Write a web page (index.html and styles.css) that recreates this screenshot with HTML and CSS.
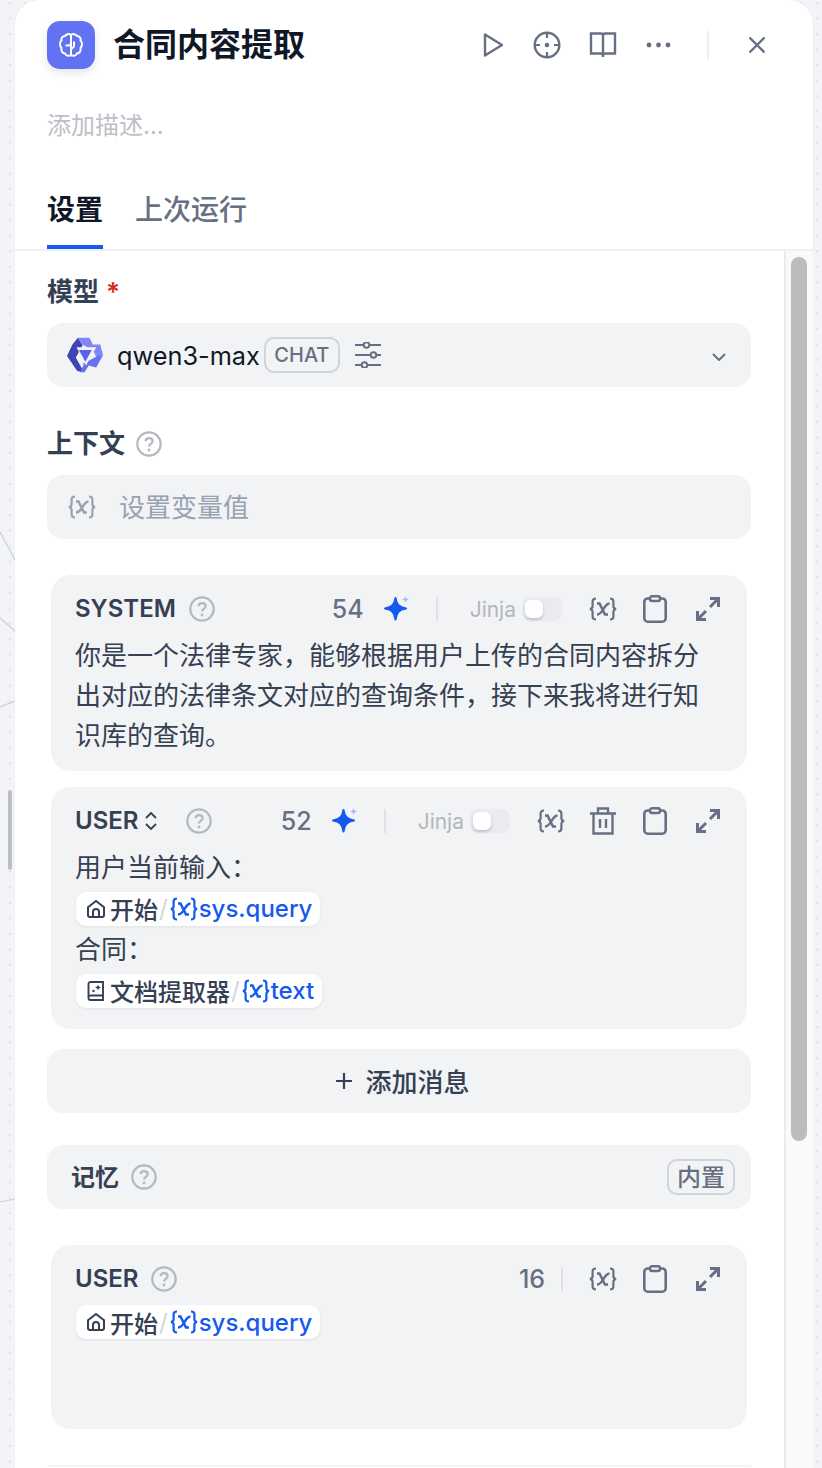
FILE: index.html
```html
<!DOCTYPE html>
<html lang="zh-CN">
<head>
    <meta charset="UTF-8">
    <meta name="viewport" content="width=device-width, initial-scale=1.0">
    <title>合同内容提取</title>
    <link rel="stylesheet" href="styles.css">
</head>
<body>

    <svg width="0" height="0" class="defs">
        <defs>
            <symbol id="i-var" viewBox="0 0 30 24">
                <path d="M8 1.500c-2.700 0-3.400 1-3.400 3v4.700c0 1.500-.8 2.400-2.600 2.800 1.800.4 2.600 1.300 2.600 2.800v4.700c0 2 .7 3 3.400 3M22 1.500c2.700 0 3.400 1 3.400 3v4.700c0 1.500.8 2.400 2.600 2.800-1.800.4-2.600 1.300-2.600 2.800v4.700c0 2-.7 3-3.400 3" fill="none" stroke="currentColor" stroke-width="2.200"/>
                <path d="M9 6.500h2.500l5.500 11h3M21.500 6.500c-2.500 0-4 2-6 5.500s-3.500 5.500-6.500 5.500" fill="none" stroke="currentColor" stroke-width="2.500"/>
            </symbol>
            <symbol id="i-help" viewBox="0 0 26 26">
                <circle cx="13" cy="13" r="11.700" fill="none" stroke="currentColor" stroke-width="2.200"/>
                <path d="M9.500 10.200c.3-2 1.800-3 3.600-3 2 0 3.500 1.200 3.500 3 0 2.600-3.600 2.700-3.600 5.300" fill="none" stroke="currentColor" stroke-width="2.200"/>
                <circle cx="13" cy="19" r="1.400" fill="currentColor"/>
            </symbol>
            <symbol id="i-clip" viewBox="0 0 24 28">
                <rect x="1.300" y="3.500" width="21.400" height="23.200" rx="3.500" fill="none" stroke="currentColor" stroke-width="2.600"/>
                <rect x="7" y="1.200" width="10" height="4.800" rx="2" fill="#f2f3f5" stroke="currentColor" stroke-width="2.400"/>
            </symbol>
            <symbol id="i-expand" viewBox="0 0 24 24">
                <path d="M14 1.500h8.500V10M22.500 1.500l-8.500 8.500" fill="none" stroke="currentColor" stroke-width="3"/>
                <path d="M1.500 14v8.500H10M1.500 22.500 10 14" fill="none" stroke="currentColor" stroke-width="3"/>
            </symbol>
            <symbol id="i-spark" viewBox="0 0 27 26">
                <path d="M12.500 2c1 6.500 3.500 9.500 10.500 10.500-7 1-9.500 4-10.500 11-1-7-3.500-10-10.500-11C9 11.500 11.500 8.500 12.500 2z" fill="#155aef" stroke="#155aef" stroke-width="2" stroke-linejoin="round"/>
                <path d="M22.500 0c.5 2.300 1.200 3 3.500 3.500-2.300.5-3 1.200-3.500 3.500-.5-2.300-1.200-3-3.500-3.500 2.300-.5 3-1.200 3.500-3.500z" fill="#9fbcf8"/>
            </symbol>
            <symbol id="i-home" viewBox="0 0 20 20">
                <path d="M2 8.200 10 2l8 6.200V16a2 2 0 0 1-2 2H4a2 2 0 0 1-2-2z" fill="none" stroke="currentColor" stroke-width="2"/>
                <path d="M7 18v-5a3 3 0 0 1 6 0v5" fill="none" stroke="currentColor" stroke-width="2"/>
            </symbol>
            <symbol id="i-doc" viewBox="0 0 20 20">
                <path d="M4.500 1h12.500v18H4.500a2 2 0 0 1-2-2V3a2 2 0 0 1 2-2zM2.500 16.500a2 2 0 0 1 2-2H17" fill="none" stroke="currentColor" stroke-width="1.900"/>
                <path d="M12 3.500c.4 1.800 1.200 2.600 3 3-1.800.4-2.600 1.200-3 3-.4-1.800-1.200-2.600-3-3 1.800-.4 2.600-1.200 3-3z" fill="currentColor"/>
                <circle cx="7.500" cy="10" r="1.200" fill="currentColor"/>
            </symbol>
        </defs>
    </svg>

    <!-- lines behind the panel, part of the workflow canvas -->
    <svg class="edges" width="15" height="1468" viewBox="0 0 15 1468">
        <path d="M0 532 15 560M0 618 15 631M0 707 15 701M0 1202 15 1199" fill="none" stroke="#c9ced6" stroke-width="1.200"/>
    </svg>
    <div class="drag-handle"></div>

    <div class="panel">
        <div class="panel-head">
            <div class="title-row">
                <div class="node-icon">
                    <svg width="24" height="24" viewBox="0 0 24 24">
                        <path d="M12 2C10 .5 7 1 6 3 3.500 3 2 5 2.500 7.500c-2 1.500-2 5.500 0 7.500-.5 3 1 5.500 3.500 5.500 1 2.500 4 3 6 1.500 2 1.500 5 1 6-1.500 2.500 0 4-2.500 3.500-5.500 2-2 2-6 0-7.500C22 5 20.500 3 18 3c-1-2-4-2.500-6-1z" fill="none" stroke="#fff" stroke-width="2"/>
                        <path d="M12 2v20M6.500 12.500H9c1.800 0 3-1 3-2.500M12 17c0-2 3-2 3-4V8.500" fill="none" stroke="#fff" stroke-width="2"/>
                    </svg>
                </div>
                <div class="node-title">合同内容提取</div>
                <div class="head-actions">
                    <svg class="ic-play" width="20" height="26" viewBox="0 0 20 26"><path d="M2 2.500v21L19 13z" fill="none" stroke="currentColor" stroke-width="2.400" stroke-linejoin="round"/></svg>
                    <svg class="ic-target" width="28" height="28" viewBox="0 0 28 28"><circle cx="14" cy="14" r="12.300" fill="none" stroke="currentColor" stroke-width="2.400"/><path d="M14 2v5M14 21v5M2 14h5M21 14h5" stroke="currentColor" stroke-width="2.200"/><circle cx="14" cy="14" r="2.300" fill="currentColor"/></svg>
                    <svg class="ic-book" width="28" height="28" viewBox="0 0 28 28"><path d="M2 2.500h10c1.200 0 2 .8 2 2v20c0-1.500-1-2-2-2H2zM26 2.500H16c-1.200 0-2 .8-2 2v20c0-1.500 1-2 2-2h10z" fill="none" stroke="currentColor" stroke-width="2.400"/><path d="M14 22v4" stroke="currentColor" stroke-width="2.400"/></svg>
                    <svg class="ic-more" width="28" height="8" viewBox="0 0 28 8"><circle cx="4" cy="4" r="2.400" fill="currentColor"/><circle cx="13.500" cy="4" r="2.400" fill="currentColor"/><circle cx="23" cy="4" r="2.400" fill="currentColor"/></svg>
                    <span class="head-sep"></span>
                    <svg class="ic-close" width="18" height="18" viewBox="0 0 18 18"><path d="M1.500 1.500l15 15M16.500 1.500l-15 15" stroke="currentColor" stroke-width="2.400"/></svg>
                </div>
            </div>
            <div class="node-desc">添加描述...</div>
            <div class="tabs">
                <div class="tab active">设置</div>
                <div class="tab">上次运行</div>
            </div>
        </div>

        <div class="panel-body">
            <div class="scroll-area">
                <div class="field-label model-label">模型 <span class="req">*</span></div>
                <div class="select-box">
                    <svg class="qwen-logo" width="36" height="36" viewBox="22 22 106 106">
                        <path d="M54 24h34l10 20h22l8 32-20 4-10-20-30-15z" fill="#8086f6"/>
                        <path d="M54 24l14 22-20 36 24 44-20-4-30-44 16-34z" fill="#3f45b5"/>
                        <path d="M66 102l46-24 16-2-20 36-22-6-12 20H60l12-24z" fill="#6a70ee"/>
                        <path d="M50 52h58L78 106z" fill="#f2f3f5"/>
                        <path d="M57 60h38l-19 35z" fill="#5a60e8"/>
                    </svg>
                    <span class="model-name">qwen3-max</span>
                    <span class="badge badge-chat">CHAT</span>
                    <svg class="ic-sliders" width="28" height="26" viewBox="0 0 28 26">
                        <path d="M1 3h8M16 3h11M1 13h15M23 13h4M1 23h6M14 23h13" stroke="currentColor" stroke-width="2.200"/>
                        <circle cx="12.500" cy="3" r="2.800" fill="none" stroke="currentColor" stroke-width="2"/>
                        <circle cx="19.500" cy="13" r="2.800" fill="none" stroke="currentColor" stroke-width="2"/>
                        <circle cx="10.500" cy="23" r="2.800" fill="none" stroke="currentColor" stroke-width="2"/>
                    </svg>
                    <svg class="ic-chevron" width="14" height="8" viewBox="0 0 14 8"><path d="M1 1l6 6 6-6" fill="none" stroke="currentColor" stroke-width="2"/></svg>
                </div>

                <div class="field-label context-label">上下文 <svg class="ic-help" width="26" height="26"><use href="#i-help"/></svg></div>
                <div class="select-box var-box">
                    <svg class="ic-var" width="30" height="24"><use href="#i-var"/></svg>
                    <span class="var-placeholder">设置变量值</span>
                </div>

                <div class="msg msg-system">
                    <div class="msg-head">
                        <span class="msg-role">SYSTEM</span>
                        <svg class="ic-help" width="26" height="26"><use href="#i-help"/></svg>
                        <span class="msg-spacer"></span>
                        <span class="msg-count">54</span>
                        <svg class="ic-spark" width="27" height="26"><use href="#i-spark"/></svg>
                        <span class="msg-sep"></span>
                        <span class="jinja">Jinja</span>
                        <span class="switch"><span class="knob"></span></span>
                        <svg class="tool tool-var" width="30" height="24"><use href="#i-var"/></svg>
                        <svg class="tool" width="24" height="28"><use href="#i-clip"/></svg>
                        <svg class="tool tool-expand" width="24" height="24"><use href="#i-expand"/></svg>
                    </div>
                    <div class="msg-text">你是一个法律专家，能够根据用户上传的合同内容拆分出对应的法律条文对应的查询条件，接下来我将进行知识库的查询。</div>
                </div>

                <div class="msg msg-user">
                    <div class="msg-head">
                        <span class="msg-role">USER</span>
                        <svg class="ic-updown" width="14" height="20" viewBox="0 0 14 20"><path d="M2 7l5-5 5 5M2 13l5 5 5-5" fill="none" stroke="currentColor" stroke-width="1.800"/></svg>
                        <svg class="ic-help help-user" width="26" height="26"><use href="#i-help"/></svg>
                        <span class="msg-spacer"></span>
                        <span class="msg-count">52</span>
                        <svg class="ic-spark" width="27" height="26"><use href="#i-spark"/></svg>
                        <span class="msg-sep"></span>
                        <span class="jinja">Jinja</span>
                        <span class="switch"><span class="knob"></span></span>
                        <svg class="tool tool-var" width="30" height="24"><use href="#i-var"/></svg>
                        <svg class="tool tool-trash" width="26" height="28" viewBox="0 0 26 28"><path d="M0 6.500h26M8 6V1.500h10V6M3.500 6.500v20h19v-20M10 12v9M16 12v9" fill="none" stroke="currentColor" stroke-width="2.400"/></svg>
                        <svg class="tool" width="24" height="28"><use href="#i-clip"/></svg>
                        <svg class="tool tool-expand" width="24" height="24"><use href="#i-expand"/></svg>
                    </div>
                    <div class="msg-text">用户当前输入：</div>
                    <div class="chip-line">
                        <span class="var-chip">
                            <svg width="20" height="20"><use href="#i-home"/></svg><span class="chip-node">开始</span><span class="chip-slash">/</span><svg class="chip-var" width="30" height="24"><use href="#i-var"/></svg><span class="chip-name">sys.query</span>
                        </span>
                    </div>
                    <div class="msg-text">合同：</div>
                    <div class="chip-line">
                        <span class="var-chip">
                            <svg width="20" height="20"><use href="#i-doc"/></svg><span class="chip-node">文档提取器</span><span class="chip-slash">/</span><svg class="chip-var" width="30" height="24"><use href="#i-var"/></svg><span class="chip-name">text</span>
                        </span>
                    </div>
                </div>

                <div class="add-msg">
                    <svg width="18" height="18" viewBox="0 0 18 18"><path d="M9 1v16M1 9h16" stroke="currentColor" stroke-width="2.200"/></svg>
                    <span class="add-msg-text">添加消息</span>
                </div>

                <div class="memory-row">
                    <span class="memory-label">记忆</span>
                    <svg class="ic-help" width="26" height="26"><use href="#i-help"/></svg>
                    <span class="msg-spacer"></span>
                    <span class="badge badge-builtin">内置</span>
                </div>

                <div class="msg msg-memory">
                    <div class="msg-head">
                        <span class="msg-role">USER</span>
                        <svg class="ic-help" width="26" height="26"><use href="#i-help"/></svg>
                        <span class="msg-spacer"></span>
                        <span class="msg-count count-plain">16</span>
                        <span class="msg-sep sep-plain"></span>
                        <svg class="tool tool-var var-after-sep" width="30" height="24"><use href="#i-var"/></svg>
                        <svg class="tool" width="24" height="28"><use href="#i-clip"/></svg>
                        <svg class="tool tool-expand" width="24" height="24"><use href="#i-expand"/></svg>
                    </div>
                    <div class="chip-line">
                        <span class="var-chip">
                            <svg width="20" height="20"><use href="#i-home"/></svg><span class="chip-node">开始</span><span class="chip-slash">/</span><svg class="chip-var" width="30" height="24"><use href="#i-var"/></svg><span class="chip-name">sys.query</span>
                        </span>
                    </div>
                </div>

                <div class="bottom-rule"></div>
            </div>

            <div class="scroll-track"><div class="scroll-thumb"></div></div>
        </div>
    </div>

</body>
</html>
```

FILE: styles.css
```css
* {
    box-sizing: border-box;
}

html, body {
    height: 100%;
}

body {
    margin: 0;
    height: 1468px;
    overflow: hidden;
    position: relative;
    font-family: Inter, "Noto Sans CJK SC", sans-serif;
    color: #354052;
    background-color: #f2f4f7;
    background-image: radial-gradient(circle, #dee1e7 1px, transparent 1.3px);
    background-size: 15.52px 15.52px;
    background-position: 2.240px -4.760px;
    display: flex;
}

.defs {
    position: absolute;
}

.edges {
    position: absolute;
    left: 0;
    top: 0;
}

.drag-handle {
    position: absolute;
    left: 8px;
    top: 790px;
    width: 4px;
    height: 80px;
    border-radius: 2px;
    background: #bcbfc9;
}

.panel {
    width: 798px;
    height: 1468px;
    margin-left: 15px;
    background: #fff;
    border-radius: 24px 24px 0 0;
    display: flex;
    flex-direction: column;
    flex: none;
    box-shadow: 0 0 1px rgba(16, 24, 40, 0.12);
}

.panel-head {
    height: 251px;
    padding: 21px 32px 0;
    border-bottom: 2px solid #eff0f2;
    flex: none;
}

.title-row {
    display: flex;
    align-items: center;
    height: 48px;
}

.node-icon {
    width: 48px;
    height: 48px;
    border-radius: 13px;
    background: #6172f3;
    display: flex;
    align-items: center;
    justify-content: center;
    box-shadow: 0 4px 8px rgba(16, 24, 40, 0.1);
}

.node-title {
    margin-left: 18px;
    font-size: 32px;
    line-height: 48px;
    font-weight: 600;
    color: #101828;
}

.head-actions {
    margin-left: auto;
    display: flex;
    align-items: center;
    color: #676f83;
}

.ic-play { margin-right: 30px; }
.ic-target { margin-right: 28px; }
.ic-book { margin-right: 28px; }
.ic-more { margin-right: 34px; }

.head-sep {
    width: 2px;
    height: 28px;
    background: #eceef1;
    margin-right: 39px;
}

.ic-close {
    margin-right: 15px;
}

.node-desc {
    margin-top: 33px;
    font-size: 24px;
    line-height: 48px;
    color: #bcc0c7;
}

.tabs {
    margin-top: 35px;
    display: flex;
    gap: 32px;
}

.tab {
    height: 64px;
    padding-top: 5px;
    font-size: 28px;
    line-height: 40px;
    font-weight: 500;
    color: #676f83;
}

.tab.active {
    color: #101828;
    font-weight: 600;
    border-bottom: 4px solid #155aef;
}

.panel-body {
    flex: 1;
    display: flex;
    min-height: 0;
}

.scroll-area {
    width: 769px;
    padding: 0 33px 0 32px;
    flex: none;
    overflow: hidden;
}

.scroll-track {
    width: 29px;
    border-left: 2px solid #e9ebee;
    background: #fafafa;
    padding: 6px 6px 0 5px;
}

.scroll-thumb {
    width: 16px;
    height: 884px;
    border-radius: 8px;
    background: #bcbcbc;
}

.field-label {
    display: flex;
    align-items: center;
    font-size: 26px;
    line-height: 40px;
    font-weight: 600;
    color: #354052;
}

.model-label {
    margin-top: 21px;
}

.req {
    color: #d92d20;
    margin-left: 7px;
    font-size: 26px;
}

.context-label {
    margin-top: 37px;
    gap: 11px;
}

.ic-help {
    color: #b4b8bf;
    flex: none;
}

.select-box {
    margin-top: 11px;
    height: 64px;
    border-radius: 16px;
    background: #f2f3f5;
    display: flex;
    align-items: center;
    padding: 0 25px 0 20px;
}

.qwen-logo {
    flex: none;
}

.model-name {
    margin-left: 14px;
    font-size: 25.300px;
    color: #101828;
}

.badge {
    border: 2px solid #d0d3d9;
    border-radius: 10px;
    color: #676f83;
    display: inline-flex;
    align-items: center;
    justify-content: center;
    height: 36px;
}

.badge-chat {
    margin-left: 4px;
    width: 76px;
    font-size: 20px;
    font-weight: 500;
}

.ic-sliders {
    margin-left: 14px;
    color: #676f83;
}

.ic-chevron {
    margin-left: auto;
    margin-top: 4px;
    color: #676f83;
}

.var-box {
    padding-left: 20px;
    color: #98a2b2;
}

.var-placeholder {
    margin-left: 22px;
    padding-bottom: 3px;
    font-size: 26px;
    color: #98a2b2;
}

.msg {
    margin-left: 4px;
    margin-right: 4px;
    border-radius: 20px;
    background: #f2f3f5;
    padding: 0 24px;
}

.msg-system {
    margin-top: 36px;
    height: 196px;
    padding-top: 20px;
}

.msg-user {
    margin-top: 16px;
    height: 242px;
    padding-top: 20px;
}

.msg-memory {
    margin-top: 36px;
    height: 184px;
    padding-top: 20px;
}

.msg-head {
    height: 28px;
    margin-right: 3px;
    display: flex;
    align-items: center;
    color: #676f83;
}

.msg-role {
    font-size: 24px;
    line-height: 28px;
    font-weight: 600;
    color: #354052;
    margin-right: 13px;
}

.msg-spacer {
    flex: 1;
}

.msg-count {
    font-size: 25px;
    font-weight: 500;
    margin-right: 19px;
}

.count-plain {
    margin-right: 16px;
}

.ic-spark {
    flex: none;
}

.msg-sep {
    width: 2px;
    height: 24px;
    background: #dfe1e5;
    margin: 0 32px 0 26px;
    flex: none;
}

.sep-plain {
    margin: 0;
}

.jinja {
    font-size: 21px;
    color: #b2b6bd;
    margin-right: 6px;
}

.switch {
    width: 40px;
    height: 24px;
    border-radius: 8px;
    background: #e9ebf0;
    padding: 3px;
    flex: none;
}

.knob {
    display: block;
    width: 18px;
    height: 18px;
    border-radius: 6px;
    background: #fff;
    box-shadow: 0 2px 3px rgba(16, 24, 40, 0.2);
}

.tool {
    margin-left: 25px;
    flex: none;
    color: #676f83;
}

.tool-var {
    margin-left: 26px;
}

.var-after-sep {
    margin-left: 25px;
}

.tool-trash {
    margin-left: 24px;
    margin-right: 2px;
}

.tool-expand {
    margin-left: 29px;
}

.ic-updown {
    margin-left: -7px;
    color: #354052;
    flex: none;
}

.help-user {
    margin-left: 28px;
}

.msg-text {
    margin-top: 13px;
    font-size: 26px;
    line-height: 40px;
    color: #354052;
}

.msg-user .msg-text {
    margin-top: 0;
    line-height: 41px;
}

.msg-user .msg-head + .msg-text {
    margin-top: 12px;
}

.chip-line {
    height: 42px;
    margin-left: 1px;
    display: flex;
    align-items: center;
}

.msg-user .chip-line {
    height: 41px;
}

.msg-memory .chip-line {
    margin-top: 8px;
}

.var-chip {
    height: 34px;
    border-radius: 10px;
    background: #fff;
    box-shadow: 0 1px 3px rgba(16, 24, 40, 0.08);
    display: inline-flex;
    align-items: center;
    padding: 0 8px 0 10px;
    color: #354052;
    font-size: 24px;
}

.chip-node {
    margin-left: 4px;
    font-weight: 500;
}

.chip-slash {
    color: #d4d6da;
    margin: 0 1px;
}

.chip-var {
    color: #155aef;
}

.chip-name {
    color: #155aef;
    font-weight: 500;
    margin-left: 0;
}

.add-msg {
    margin-top: 20px;
    height: 64px;
    border-radius: 16px;
    background: #f2f3f5;
    display: flex;
    align-items: center;
    justify-content: center;
    gap: 12px;
    padding-left: 7px;
    color: #354052;
    font-size: 26px;
    font-weight: 500;
}

.add-msg-text {
    padding-bottom: 2px;
}

.memory-row {
    margin-top: 32px;
    height: 64px;
    border-radius: 16px;
    background: #f2f3f5;
    display: flex;
    align-items: center;
    padding: 0 16px 0 24px;
    gap: 12px;
}

.memory-label {
    padding-bottom: 3px;
    font-size: 24px;
    font-weight: 600;
    color: #354052;
}

.badge-builtin {
    width: 68px;
    padding-bottom: 3px;
    font-size: 24px;
    font-weight: 500;
}

.bottom-rule {
    margin-top: 36px;
    height: 2px;
    background: #f2f3f5;
}
```
